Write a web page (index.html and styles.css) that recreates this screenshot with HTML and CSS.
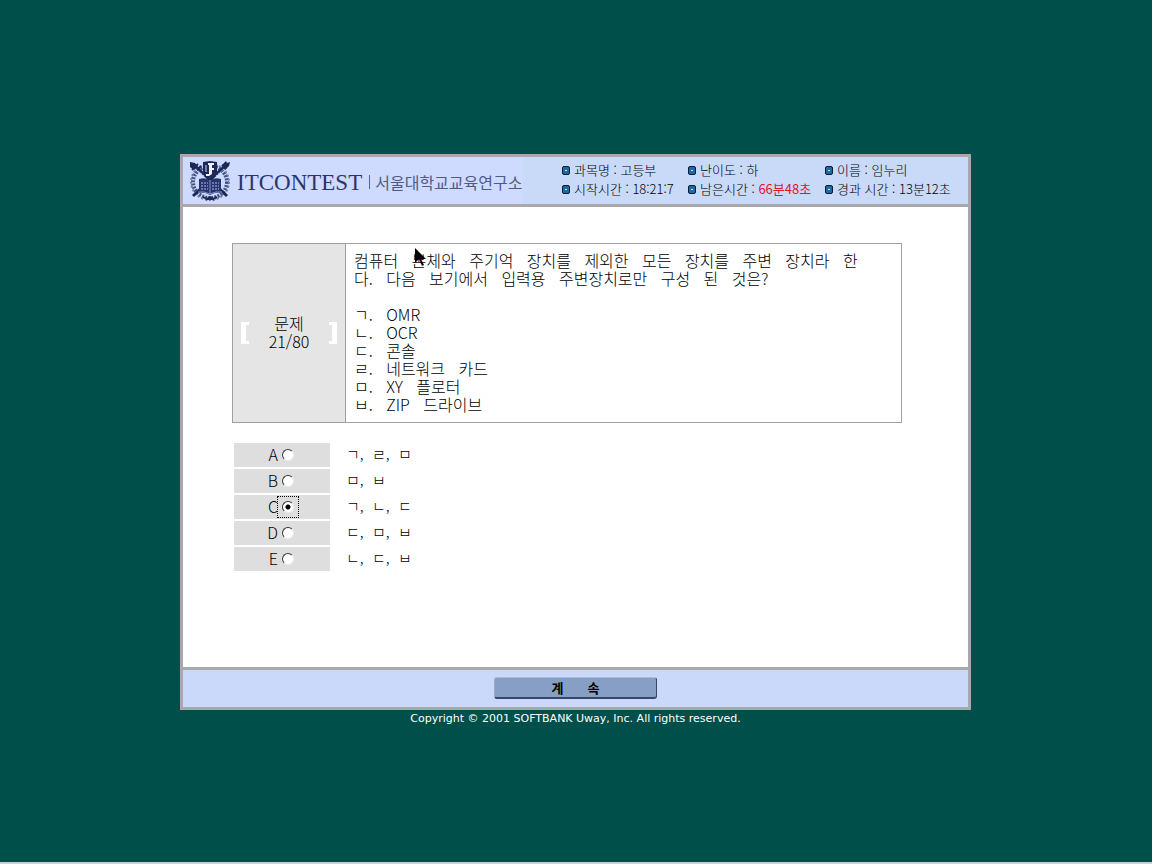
FILE: index.html
```html
<!DOCTYPE html>
<html lang="ko">
<head>
<meta charset="utf-8">
<meta name="viewport" content="width=device-width, initial-scale=1">
<title>ITCONTEST</title>
<link rel="stylesheet" href="styles.css">
</head>
<body>
<form class="panel">
  <header class="header">
    <div class="brand">
      <svg class="emblem" viewBox="0 0 42 42" aria-hidden="true">
        <ellipse cx="21" cy="22" rx="17" ry="16" fill="none" stroke="#46527f" stroke-width="4" stroke-dasharray="2 1.2"/>
        <ellipse cx="21" cy="22" rx="19" ry="18" fill="none" stroke="#6f7dae" stroke-width="2" stroke-dasharray="2 2"/>
        <path d="M4 4l34 32M38 4L4 36" stroke="#1d2857" stroke-width="3"/>
        <path d="M7 9l8 7M35 9l-8 7" stroke="#a9b7e0" stroke-width="1" stroke-dasharray="2 1"/>
        <path d="M1 2l5 1 3 4-4 3-4-3zM33 5l4-4 1 2 3-1-1 4-4 4z" fill="#1d2857"/>
        <path d="M3 10l6-6M8 10l4-4M33 5l4 4" stroke="#1d2857" stroke-width="2"/>
        <path d="M14 2l7-1 7 1v11q-2 4-7 5-5-1-7-5z" fill="#1d2857"/>
        <path d="M19 3h6v2h-2v3h2v2h-2v4l-3 2h-3v-2h3V5h-1z" fill="#eef2ff"/>
        <path d="M17 5v7" stroke="#cfdaff"/>
        <path d="M10 19q6-2 11 1 5-3 11-1v14q-6-1-11 2-5-3-11-2z" fill="#26356d"/>
        <path d="M12 23h7M23 23h7M12 26h7M23 26h7M12 29h7M23 29h7" stroke="#aebde8" stroke-width="1" stroke-dasharray="2 1"/>
        <path d="M21 20v14M9 32q6-1 12 2 6-3 12-2" fill="none" stroke="#8797c8"/>
        <path d="M14 37q7 4 14 0M17 40l4-3 4 3" fill="none" stroke="#1d2857" stroke-width="2"/>
      </svg>
      <strong class="brand-name">ITCONTEST</strong>
      <span class="brand-org">서울대학교교육연구소</span>
    </div>
    <ul class="info">
      <li>과목명 : 고등부</li>
      <li>난이도 : 하</li>
      <li>이름 : 임누리</li>
      <li>시작시간 : 18:21:7</li>
      <li>남은시간 : <span class="remaining">66분48초</span></li>
      <li>경과 시간 : 13분12초</li>
    </ul>
  </header>

  <main class="content">
    <section class="question">
      <div class="counter">
        <span class="bracket"></span>
        <p class="counter-text">문제<br>21/80</p>
        <span class="bracket bracket-right"></span>
      </div>
      <div class="question-text">
        <p>컴퓨터   본체와   주기억   장치를   제외한   모든   장치를   주변   장치라   한<br>다.   다음   보기에서   입력용   주변장치로만   구성   된   것은?</p>
        <p>ㄱ.   OMR<br>ㄴ.   OCR<br>ㄷ.   콘솔<br>ㄹ.   네트워크   카드<br>ㅁ.   XY   플로터<br>ㅂ.   ZIP   드라이브</p>
        <svg class="pointer" viewBox="0 0 12 19" aria-hidden="true"><path d="M0 0v15l4-4 3 7 2-1-3-6h5z" fill="#000"/></svg>
      </div>
    </section>

    <div class="choices" role="radiogroup" aria-label="문제 21">
      <div class="choice"><span class="key"><label for="a">A</label><input type="radio" name="answer" id="a"></span><label for="a" class="choice-text">ㄱ,  ㄹ,  ㅁ</label></div>
      <div class="choice"><span class="key"><label for="b">B</label><input type="radio" name="answer" id="b"></span><label for="b" class="choice-text">ㅁ,  ㅂ</label></div>
      <div class="choice"><span class="key"><label for="c">C</label><input type="radio" name="answer" id="c" checked></span><label for="c" class="choice-text">ㄱ,  ㄴ,  ㄷ</label></div>
      <div class="choice"><span class="key"><label for="d">D</label><input type="radio" name="answer" id="d"></span><label for="d" class="choice-text">ㄷ,  ㅁ,  ㅂ</label></div>
      <div class="choice"><span class="key"><label for="e">E</label><input type="radio" name="answer" id="e"></span><label for="e" class="choice-text">ㄴ,  ㄷ,  ㅂ</label></div>
    </div>
  </main>

  <footer class="footer">
    <button type="button" class="continue"><span>계</span><span>속</span></button>
  </footer>
</form>
<p class="copyright">Copyright © 2001 SOFTBANK Uway, Inc. All rights reserved.</p>
</body>
</html>
```
FILE: styles.css
```css
*,
*::before {
  box-sizing: border-box;
}

body {
  min-height: 100vh;
  margin: 0;
  padding: 154px 1px 0 0;
  border-bottom: 2px solid #c5d5d3;
  background: #004f4a;
  color: #000;
  font-family: "Noto Sans CJK KR", sans-serif;
  font-weight: 300;
}

p, ul {
  margin: 0;
  padding: 0;
}

.panel {
  max-width: 791px;
  margin: 0 auto;
  border: 3px solid #a9a9ad;
  background: #fff;
}

.header {
  display: flex;
  align-items: center;
  justify-content: space-between;
  min-height: 50px;
  border-bottom: 3px solid #a9a9ad;
  background: linear-gradient(to right, #cfdaff 340px, #c9daf9 340px);
}

.brand {
  display: flex;
  align-items: center;
  padding-left: 6px;
}

.emblem {
  width: 42px;
  height: 42px;
}

.brand-name {
  margin: 4px 7px 0 6px;
  color: #2b3568;
  font: 400 23px/24px "Liberation Serif", serif;
}

.brand-org {
  margin-top: 2px;
  padding-left: 5px;
  border-left: 1px solid #5a648f;
  color: #4f5986;
  font-size: 16px;
  font-weight: 400;
  line-height: 14px;
}

.info {
  display: grid;
  grid-template-columns: 126px 137px 136px;
  padding: 0 8px 4px 0;
  font-size: 13px;
  line-height: 19px;
  list-style: none;
}

.info li {
  display: flex;
  align-items: center;
  white-space: pre;
}

.info li::before {
  content: "";
  width: 8px;
  height: 9px;
  margin: 2px 4px 0 1px;
  border: 1px solid #0b1b35;
  border-radius: 2px;
  background: linear-gradient(#cfe8f5, #cfe8f5) center / 2px 1px no-repeat #1d6aa5;
}

.remaining {
  color: #e3122f;
  font-weight: 400;
}

.content {
  min-height: 460px;
  padding: 36px 66px 36px 49px;
}

.question {
  display: flex;
  border: 1px solid #a0a0a0;
}

.counter {
  display: flex;
  align-items: center;
  justify-content: space-between;
  width: 113px;
  padding: 0 8px;
  border-right: 1px solid #a0a0a0;
  background: #e5e5e5;
}

.counter-text {
  padding-bottom: 3px;
  font-size: 16px;
  line-height: 18px;
  text-align: center;
}

.bracket {
  width: 8px;
  height: 22px;
  background:
    linear-gradient(#fff, #fff) left / 5px 100% no-repeat,
    linear-gradient(#fff, #fff) top / 100% 3px no-repeat,
    linear-gradient(#fff, #fff) bottom / 100% 3px no-repeat;
}

.bracket-right {
  background-position: right, top, bottom;
}

.question-text {
  position: relative;
  flex: 1;
  display: grid;
  gap: 18px;
  padding: 7px 8px 9px;
  font-size: 16px;
  line-height: 18px;
}

.question-text p {
  white-space: pre-wrap;
}

.pointer {
  position: absolute;
  top: 4px;
  left: 69px;
  width: 12px;
  height: 19px;
}

.choices {
  display: grid;
  gap: 2px;
  padding: 20px 2px 0;
}

.choice {
  display: flex;
  align-items: center;
  gap: 16px;
  font-size: 16px;
  line-height: 22px;
}

.key {
  display: flex;
  align-items: center;
  justify-content: flex-end;
  width: 96px;
  height: 24px;
  padding-right: 32px;
  background: #dedede;
}

.key label,
.choice-text {
  padding-bottom: 2px;
}

.key input {
  display: grid;
  place-items: center;
  appearance: none;
  width: 20px;
  height: 20px;
  margin: 0;
}

.key input::before {
  content: "";
  width: 12px;
  height: 12px;
  border: 1px solid;
  border-color: #333 #eee #eee #333;
  border-radius: 50%;
  background: #fff;
}

.key input:checked::before {
  background: radial-gradient(#000 2px, #fff 3px);
}

.key input:checked {
  outline: 1px dotted #000;
}

.choice-text {
  font-size: 15px;
  white-space: pre;
}

.footer {
  display: flex;
  justify-content: center;
  padding: 7px 0 8px;
  border-top: 3px solid #a9a9ad;
  background: #cad9f9;
}

.continue {
  display: flex;
  align-items: center;
  justify-content: center;
  gap: 24px;
  width: 163px;
  height: 22px;
  padding: 0;
  border: 1px solid;
  border-color: #aabbd3 #34496a #34496a #9aaccc;
  border-bottom-width: 2px;
  border-radius: 3px;
  background: #879fc4;
  color: #000;
  font: 700 13px/18px "Noto Sans CJK KR", sans-serif;
}

.copyright {
  color: #fff;
  font: 400 11px/18px "DejaVu Sans", sans-serif;
  text-align: center;
}
```
